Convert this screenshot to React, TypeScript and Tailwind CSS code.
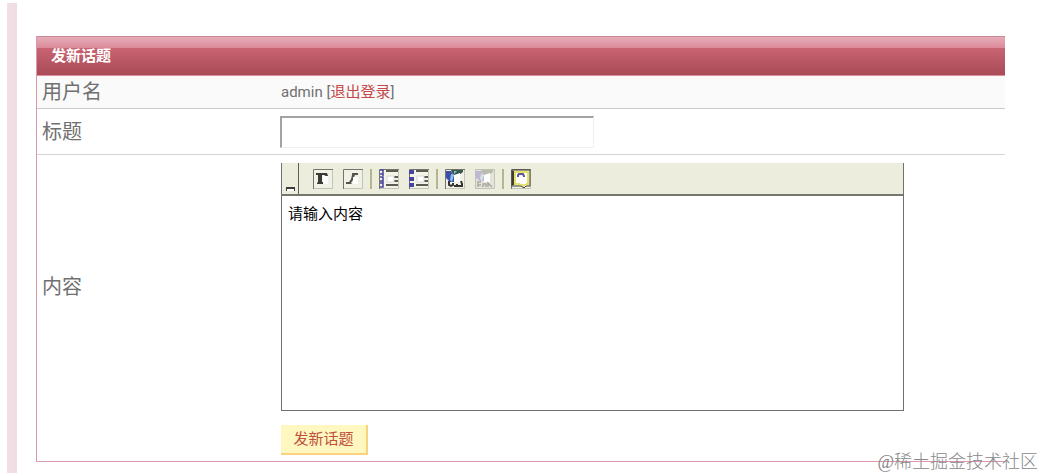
import type { ReactNode } from "react";

const toolGroups = [
  [
    { id: "bold", label: "粗体" },
    { id: "italic", label: "斜体" },
  ],
  [
    { id: "ordered", label: "编号列表" },
    { id: "unordered", label: "项目列表" },
  ],
  [
    { id: "link", label: "插入链接" },
    { id: "unlink", label: "取消链接" },
  ],
  [{ id: "about", label: "关于" }],
];

const glyphs: Record<string, ReactNode> = {
  bold: (
    <>
      <path d="M3 4h11l1 3h-2l-2-1H9v7h2v2H4v-1l1-1V6H3z" fill="#3b3a37" />
      <path d="M10 7h5v8h-5z" fill="#fff" />
    </>
  ),
  italic: (
    <>
      <path d="M9 4h6v2h-3l-2 5-2 3 1 1H3v-2h3l2-3 1-4z" fill="#55544f" />
      <path d="M10 8h5v7h-5z" fill="#fff" />
    </>
  ),
  ordered: (
    <>
      <path d="M5 2h14v16H5z" fill="#f3f3e8" />
      <path
        d="M1 1h3v4H1M4 5v2M1 8h3v4H1M4 12v2M1 14h3v4H1"
        fill="none"
        stroke="#4842a0"
        strokeWidth="1.5"
      />
      <path d="M7 1h12v2H7zM7 15h12v2H7zM13 7h6v2h-6zM14 11h5v2h-5z" fill="#5c5b54" />
      <path d="M8 7h7v6H8z" fill="#fff" stroke="#d8d8d0" strokeWidth="1" />
    </>
  ),
  unordered: (
    <>
      <path d="M5 2h14v16H5z" fill="#f3f3e8" />
      <path d="M0 1h5v4H0zM0 8h5v4H0zM0 14h5v4H0z" fill="#4842a0" />
      <path d="M7 1h12v2H7zM7 15h12v2H7zM13 7h6v2h-6zM14 11h5v2h-5z" fill="#5c5b54" />
      <path d="M8 7h7v6H8z" fill="#fff" stroke="#d8d8d0" strokeWidth="1" />
    </>
  ),
  link: (
    <>
      <path d="M1 2h5l2 4 2 2v5H5l-4-4z" fill="#3d4cab" />
      <path d="M6 1h12v2l-4 3-4 1-3-3z" fill="#35584b" />
      <path d="M6 5l3 1-2 7-2-2zM9 2h3l-3 3z" fill="#84c6ea" />
      <path d="M9 6l6-2v9H9z" fill="#fff" />
      <path d="M4 12v4l2 1 2-1v-2m1 3h3v-2m1 2h4v-2l-1-3" fill="none" stroke="#35322f" strokeWidth="2" />
    </>
  ),
  unlink: (
    <>
      <path d="M1 2h5l2 4 2 2v4H5L1 9z" fill="#bdb9d2" />
      <path d="M6 1h12v2l-4 3-4 1-3-3z" fill="#b9bdae" />
      <path d="M6 5l3 1-2 6-2-2z" fill="#d8e2e4" />
      <path d="M9 6l6-2v9H9z" fill="#fff" />
      <path d="M2 13h4M3 14v4m0-2h3m2 2v-3h3v3m2 0v-4l4 4" fill="none" stroke="#aaa8a3" strokeWidth="1.5" />
    </>
  ),
  about: (
    <>
      <path d="M4 3h13v12h-3l-2 2-2-2H4z" fill="#fffffa" stroke="#e4e168" strokeWidth="2" />
      <path d="M1 1h18v16h-4l-2 2-3-2H1z" fill="none" stroke="#403e34" strokeWidth="1" />
      <path d="M2 2v14" stroke="#403e34" strokeWidth="2" />
      <path d="M7 8V6l1-1h4l1 2v1" fill="none" stroke="#5f579d" strokeWidth="2" />
      <path d="M9 8h6v7H9z" fill="#fff" />
    </>
  ),
};

function ToolButton({ id, label }: { id: string; label: string }) {
  return (
    <button type="button" aria-label={label} className="size-5">
      <svg viewBox="0 0 20 20" className="size-5" aria-hidden="true">
        <path d="M0 0h20v20H0z" fill={id === "unlink" ? "#e4e5d8" : "#f1f2e6"} />
        <path d="M19.5 0v19.5H0" fill="none" stroke="#c3c4b8" />
        <path
          d="M.5 20V.5H20"
          fill="none"
          stroke={id === "unlink" ? "#c0c0b6" : "#74746c"}
        />
        {glyphs[id]}
      </svg>
    </button>
  );
}

function Toolbar() {
  return (
    <div className="flex h-[33px] border-b-2 border-[#74776c] bg-[#eceddc]">
      <div className="flex w-[17px] items-end justify-center border-r border-[#5f5f58] pb-[3px]">
        <span className="h-1 w-[9px] border-t-2 border-l border-r border-[#3b3b37] bg-white" />
      </div>
      <div className="flex items-center pl-[14px]">
        {toolGroups.map((group, i) => (
          <div key={i} className="flex items-center">
            {i > 0 && <span className="mx-[7px] h-5 w-[2px] bg-[#b5b592]" />}
            <div className="flex gap-[10px]">
              {group.map((tool) => (
                <ToolButton key={tool.id} id={tool.id} label={tool.label} />
              ))}
            </div>
          </div>
        ))}
      </div>
    </div>
  );
}

export default function App() {
  return (
    <div className="relative flex bg-white py-[3px] pr-[39px] pl-[7px] font-['Roboto','Noto_Sans_CJK_SC',sans-serif] text-[15px] text-[#707070]">
      <div className="w-[10px] shrink-0 bg-linear-to-r from-[#f4dfe6] to-[#eedde2]" />
      <form
        className="mt-[33px] mb-[11px] ml-[19px] flex-1 border-l border-b border-[#dd98ab]"
        onSubmit={(e) => e.preventDefault()}
      >
        <div className="border-t border-b border-t-[#c78995] border-b-[#dc8f9c]">
          <div className="h-[11px] bg-linear-to-b from-[#e5adb9] to-[#dc8998]" />
          <h1 className="h-[27px] bg-linear-to-b from-[#c96473] to-[#a84b55] pl-[14px] text-[15px] leading-4 font-bold text-white">
            发新话题
          </h1>
        </div>

        <div className="flex h-[33px] items-center border-b border-[#ccc] bg-[#fafafa] pl-[5px]">
          <div className="w-[239px] text-[20px] leading-6">用户名</div>
          <div>
            admin [
            <a href="#logout" className="text-[#c44848]">
              退出登录
            </a>
            ]
          </div>
        </div>

        <div className="flex h-[46px] items-center border-b border-[#d3d3d3] pl-[5px]">
          <label htmlFor="title" className="w-[238px] text-[20px] leading-6">
            标题
          </label>
          <input
            id="title"
            type="text"
            className="h-8 w-[314px] border-t-2 border-r border-b border-l-2 border-t-[#a3a3a3] border-r-[#f0f0f0] border-b-[#f0f0f0] border-l-[#a3a3a3] px-1 outline-none"
          />
        </div>

        <div className="flex items-center pt-2 pl-[5px]">
          <label htmlFor="content" className="w-[239px] text-[20px] leading-6">
            内容
          </label>
          <div className="w-[623px] border-r border-b border-l border-[#707070]">
            <Toolbar />
            <textarea
              id="content"
              defaultValue="请输入内容"
              className="block h-[214px] w-full resize-none px-[6px] py-[6px] leading-6 text-black outline-none"
            />
          </div>
        </div>

        <div className="pt-[14px] pb-[6px] pl-[244px]">
          <button
            type="submit"
            className="block h-[30px] w-[87px] border-r-2 border-b-2 border-[#f8d27c] bg-[#fff7c0] text-[#c1513f]"
          >
            发新话题
          </button>
        </div>
      </form>
      <div className="absolute right-[6px] bottom-1 font-['Liberation_Serif','Noto_Sans_CJK_SC',serif] text-[18px] leading-5 font-light text-[#888]">
        @稀土掘金技术社区
      </div>
    </div>
  );
}
